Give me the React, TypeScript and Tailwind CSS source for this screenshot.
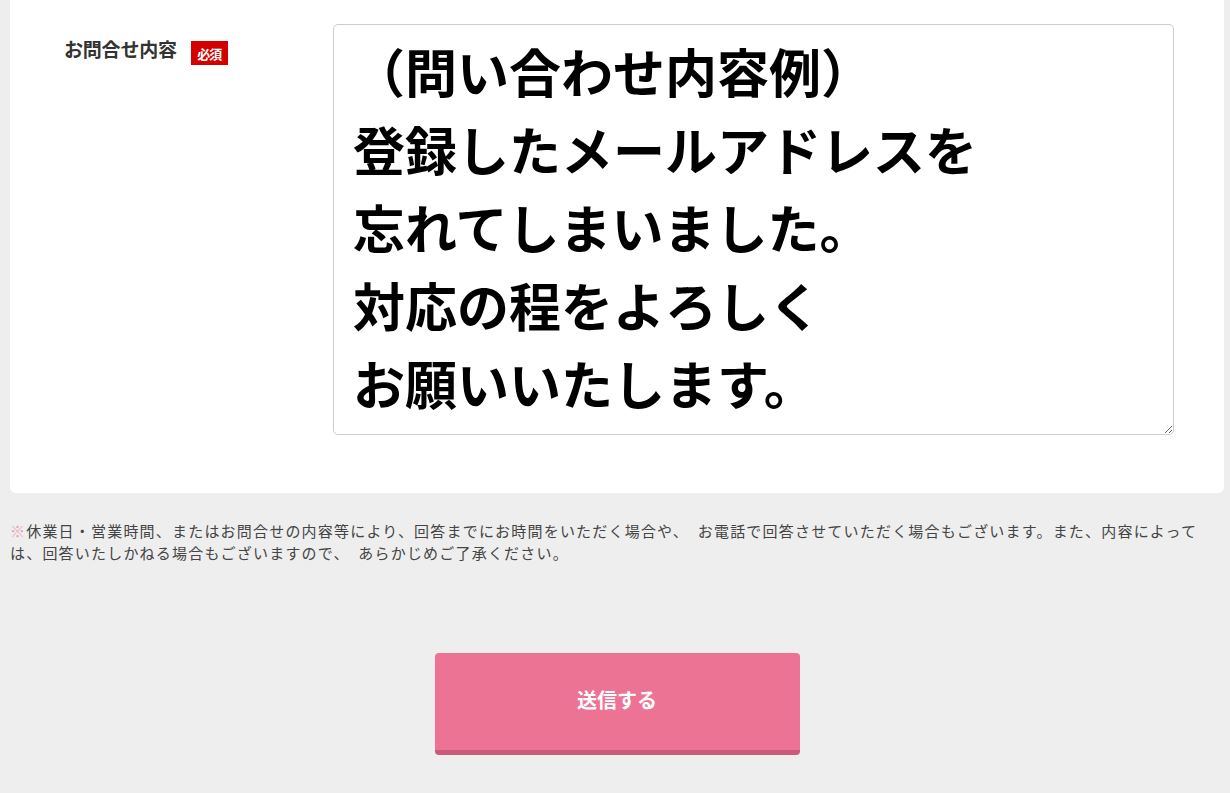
import React from "react";

export default function App() {
  const body =
    "（問い合わせ内容例）\n登録したメールアドレスを\n忘れてしまいました。\n対応の程をよろしく\nお願いいたします。";
  return (
    <div
      className="min-h-[793px] w-[1230px] bg-[#eeeeee]"
      style={{ fontFamily: '"Noto Sans CJK JP", "Noto Sans", sans-serif' }}
    >
      <div className="ml-[10px] w-[1214px] rounded-b-[6px] bg-white pt-[24px] pb-[58px]">
        <div className="flex">
          <div className="ml-[54px] mt-[11px] flex h-[27px] w-[269px] items-start">
            <span className="text-[19px] font-bold leading-[27px] tracking-[-0.2px] text-[#333333]">
              お問合せ内容
            </span>
            <span className="ml-[14px] mt-[6px] flex h-[24px] w-[37px] items-center justify-center bg-[#d40000] text-[13px] font-bold leading-none tracking-[-1px] text-white">
              必須
            </span>
          </div>
          <textarea
            readOnly
            defaultValue={body}
            className="h-[411px] w-[841px] resize-y overflow-hidden rounded-[5px] border border-[#cccccc] bg-white px-[19px] pt-[7px] text-[52px] font-bold leading-[78px] text-black outline-none"
            style={{ fontFamily: '"Noto Sans CJK JP", "Noto Sans", sans-serif' }}
          />
        </div>
      </div>
      <p className="ml-[10px] mt-[27px] w-[1206px] text-[15px] leading-[22px] tracking-[1.2px] text-[#444444]">
        <span className="text-[#eaa3b6]">※</span>休業日・営業時間、またはお問合せの内容等により、回答までにお時間をいただく場合や、　お電話で回答させていただく場合もございます。また、内容によっては、回答いたしかねる場合もございますので、　あらかじめご了承ください。
      </p>
      <div className="ml-[10px] flex w-[1214px] justify-center pt-[89px]">
        <button className="flex h-[102px] w-[365px] items-center justify-center rounded-[4px] border-b-[5px] border-[#c95a7a] bg-[#ed7394] pb-[3px] text-[20px] font-bold text-white">
          送信する
        </button>
      </div>
    </div>
  );
}
